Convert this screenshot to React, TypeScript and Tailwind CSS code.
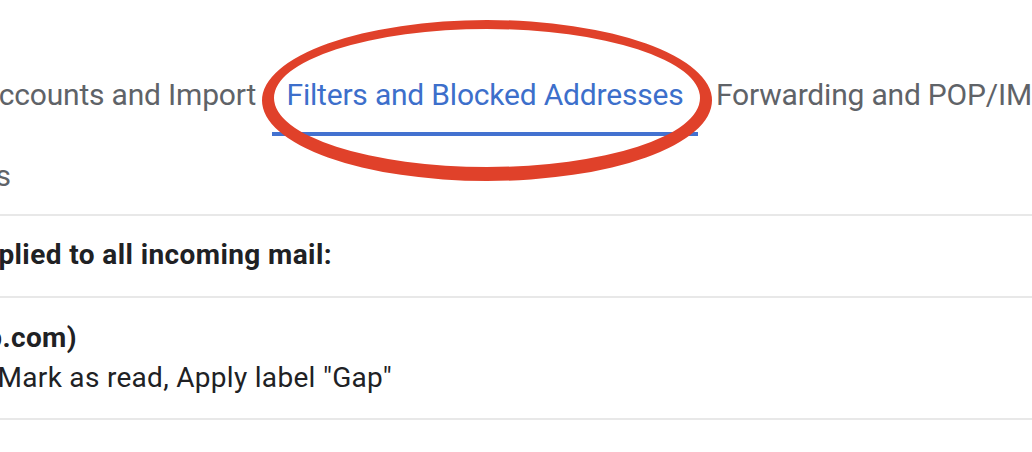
export default function App() {
  return (
    <div className="relative w-[1032px] h-[452px] overflow-hidden bg-white font-[Roboto,'Liberation_Sans',sans-serif]">
      {/* Tabs row */}
      <div className="flex whitespace-nowrap pt-[75px]">
        <div className="flex flex-col w-[272px] shrink-0">
          <div className="flex justify-end pr-[16px] text-[30px] leading-[40px] tracking-[-0.2px] text-[#5f6368]">
            <span>Accounts and Import</span>
          </div>
          <div className="mt-[17px] h-[4px]" />
        </div>
        <div className="flex flex-col w-[426px] shrink-0">
          <div className="flex justify-center text-[30px] leading-[40px] tracking-[-0.2px] text-[#3d6fcb]">
            <span>Filters and Blocked Addresses</span>
          </div>
          <div className="mt-[17px] h-[4px] bg-[#4372d0]" />
        </div>
        <div className="flex flex-col shrink-0 pl-[18px]">
          <div className="text-[30px] leading-[40px] tracking-[-0.2px] text-[#5f6368]">
            <span>Forwarding and POP/IMAP</span>
          </div>
          <div className="mt-[17px] h-[4px]" />
        </div>
      </div>

      {/* Sub row */}
      <div className="h-[80px] pt-[20px] border-b-2 border-[#e8e8e8]">
        <div className="flex justify-end w-[11px] text-[30px] leading-[40px] text-[#5f6368] whitespace-nowrap">
          <span>Labels</span>
        </div>
      </div>

      {/* Heading row */}
      <div className="h-[82px] pt-[21px] border-b-2 border-[#e8e8e8]">
        <div className="flex justify-end w-[332px] text-[28px] leading-[36px] tracking-[0.4px] font-bold text-[#202124] whitespace-nowrap">
          <span>The following filters are applied to all incoming mail:</span>
        </div>
      </div>

      {/* Filter row */}
      <div className="h-[122px] pt-[20px] border-b-2 border-[#e8e8e8]">
        <div className="flex justify-end w-[77px] text-[28px] leading-[40px] tracking-[0.4px] font-bold text-[#202124] whitespace-nowrap">
          <span>Matches: from:(info@gap.com)</span>
        </div>
        <div className="flex justify-end w-[392px] text-[28px] leading-[40px] tracking-[0.3px] text-[#202124] whitespace-nowrap">
          <span>Do this: Mark as read, Apply label "Gap"</span>
        </div>
      </div>

      {/* Red hand-drawn ellipse annotation */}
      <svg
        className="absolute left-0 top-0 pointer-events-none"
        width="1032"
        height="452"
        viewBox="0 0 1032 452"
      >
        <path
          fillRule="evenodd"
          fill="#e0412a"
          d="M262 100.5 A225 80.5 0 1 0 712 100.5 A225 80.5 0 1 0 262 100.5 Z M274 98 A213 69 0 1 0 700 98 A213 69 0 1 0 274 98 Z"
        />
      </svg>
    </div>
  );
}
